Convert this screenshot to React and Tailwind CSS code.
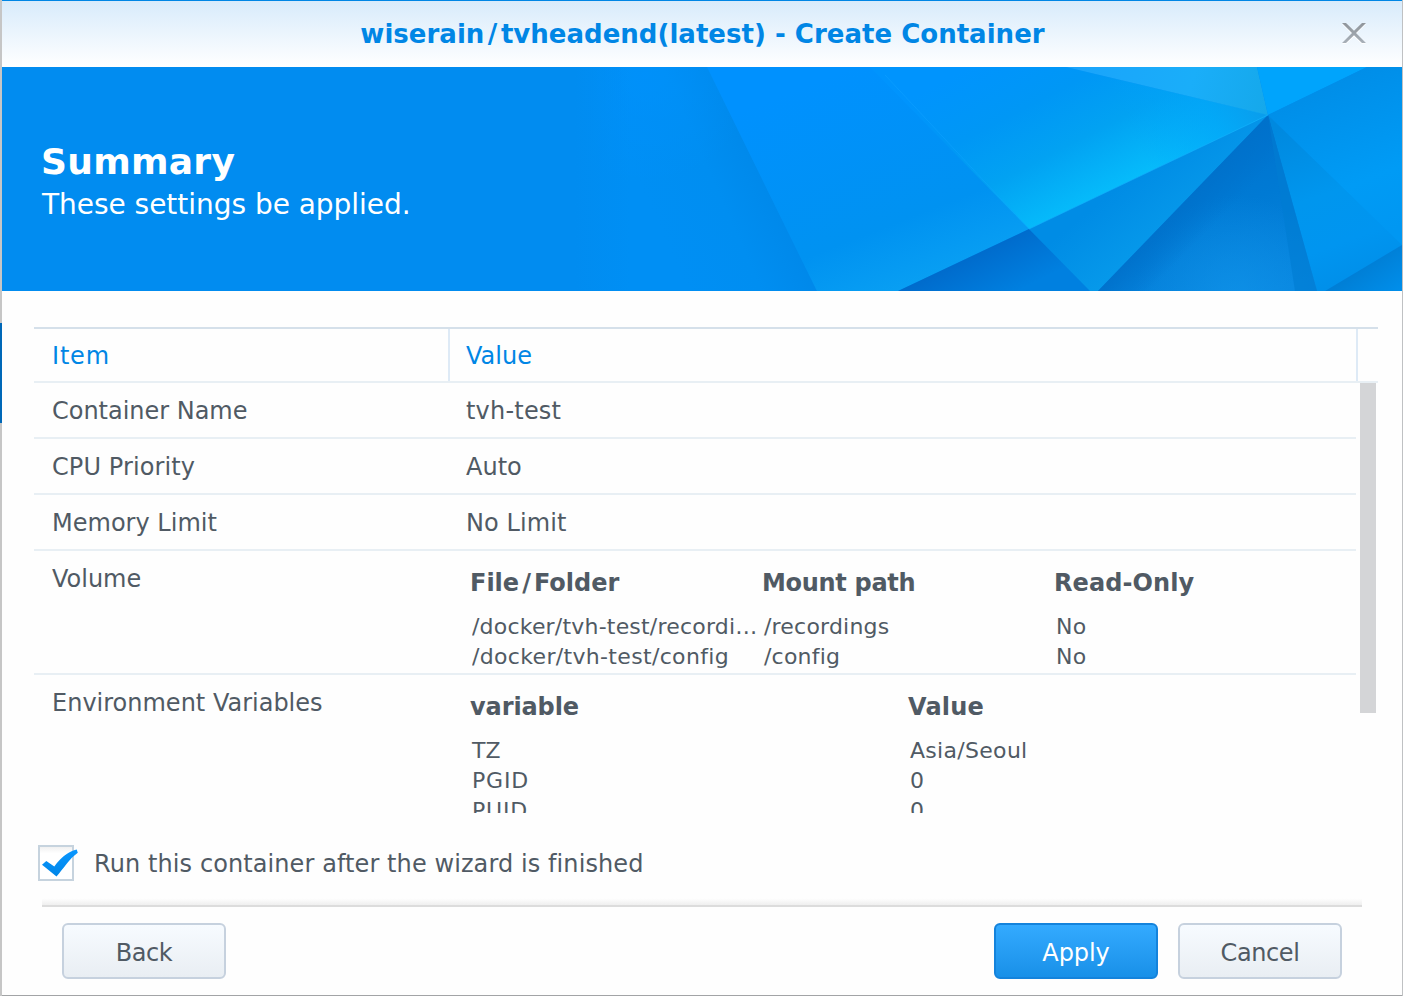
const settings = [
  { item: 'Container Name', value: 'tvh-test', itemCls: 'tracking-[-0.02px]', valueCls: 'tracking-[0.2px]' },
  { item: 'CPU Priority', value: 'Auto', itemCls: 'tracking-[0.1px]', valueCls: 'tracking-[0px]' },
  { item: 'Memory Limit', value: 'No Limit', itemCls: 'tracking-[0.02px]', valueCls: 'tracking-[0.1px]' },
];

const volumes = [
  { path: '/docker/tvh-test/recordings', mount: '/recordings', readOnly: 'No', pathCls: 'tracking-[0.2px]' },
  { path: '/docker/tvh-test/config', mount: '/config', readOnly: 'No', pathCls: 'tracking-[0.33px]' },
];

const variables = [
  { name: 'TZ', value: 'Asia/Seoul', nameCls: 'tracking-[0px]' },
  { name: 'PGID', value: '0', nameCls: 'tracking-[0.8px]' },
  { name: 'PUID', value: '0', nameCls: 'tracking-[0.8px]' },
];

function BannerArt() {
  return (
    <svg className="absolute inset-0 h-full w-full" viewBox="2 67 1400 224" preserveAspectRatio="none" aria-hidden="true">
      <defs>
        <linearGradient id="fold" gradientUnits="userSpaceOnUse" x1="640" y1="185" x2="765" y2="130">
          <stop offset="0" stopColor="#008ff4" />
          <stop offset="0.5" stopColor="#008ef1" />
          <stop offset="1" stopColor="#0087e8" />
        </linearGradient>
        <linearGradient id="base" gradientUnits="userSpaceOnUse" x1="575" y1="0" x2="630" y2="0">
          <stop offset="0" stopColor="#018cf0" />
          <stop offset="1" stopColor="#018cf0" stopOpacity="0" />
        </linearGradient>
        <radialGradient id="glow" gradientUnits="userSpaceOnUse" cx="645" cy="75" r="110">
          <stop offset="0" stopColor="#0092ff" stopOpacity="0.6" />
          <stop offset="1" stopColor="#0092ff" stopOpacity="0" />
        </radialGradient>
        <linearGradient id="panel" gradientUnits="userSpaceOnUse" x1="820" y1="80" x2="910" y2="310">
          <stop offset="0" stopColor="#0091fe" />
          <stop offset="0.65" stopColor="#0092f1" />
          <stop offset="1" stopColor="#0ba3f3" />
        </linearGradient>
        <linearGradient id="bright" gradientUnits="userSpaceOnUse" x1="1040" y1="30" x2="1122" y2="187">
          <stop offset="0" stopColor="#0094fd" />
          <stop offset="0.35" stopColor="#0097f5" />
          <stop offset="0.65" stopColor="#02a2f2" />
          <stop offset="1" stopColor="#06bcfb" />
        </linearGradient>
        <linearGradient id="brightEnd" gradientUnits="userSpaceOnUse" x1="1150" y1="171" x2="1268" y2="115">
          <stop offset="0" stopColor="#009ffa" stopOpacity="0" />
          <stop offset="0.6" stopColor="#02a2f7" stopOpacity="0.65" />
          <stop offset="1" stopColor="#0a9ceb" />
        </linearGradient>
        <linearGradient id="topLight" gradientUnits="userSpaceOnUse" x1="1070" y1="60" x2="1268" y2="115">
          <stop offset="0" stopColor="#1aa3fb" />
          <stop offset="0.6" stopColor="#1aaef9" />
          <stop offset="1" stopColor="#15a8ea" />
        </linearGradient>
        <linearGradient id="right" gradientUnits="userSpaceOnUse" x1="1320" y1="85" x2="1380" y2="235">
          <stop offset="0" stopColor="#008ee8" />
          <stop offset="0.65" stopColor="#009bf5" />
          <stop offset="1" stopColor="#0097f2" />
        </linearGradient>
        <linearGradient id="lowRight" gradientUnits="userSpaceOnUse" x1="1275" y1="130" x2="1335" y2="291">
          <stop offset="0" stopColor="#0089df" />
          <stop offset="0.45" stopColor="#0096ee" />
          <stop offset="0.75" stopColor="#0095f0" />
          <stop offset="1" stopColor="#008fe9" />
        </linearGradient>
        <linearGradient id="wedge" gradientUnits="userSpaceOnUse" x1="1120" y1="185" x2="1170" y2="245">
          <stop offset="0" stopColor="#008ce5" />
          <stop offset="1" stopColor="#079beb" />
        </linearGradient>
        <linearGradient id="dark" gradientUnits="userSpaceOnUse" x1="1215" y1="110" x2="1265" y2="291">
          <stop offset="0" stopColor="#0070cb" />
          <stop offset="0.5" stopColor="#007ad4" />
          <stop offset="1" stopColor="#0886df" />
        </linearGradient>
        <linearGradient id="darkEdge" gradientUnits="userSpaceOnUse" x1="1180" y1="200" x2="1210" y2="229">
          <stop offset="0" stopColor="#0071cb" />
          <stop offset="1" stopColor="#0071cb" stopOpacity="0" />
        </linearGradient>
        <radialGradient id="darkGlow" gradientUnits="userSpaceOnUse" cx="1235" cy="295" r="100">
          <stop offset="0" stopColor="#1094ea" stopOpacity="0.65" />
          <stop offset="1" stopColor="#1094ea" stopOpacity="0" />
        </radialGradient>
        <linearGradient id="navy" gradientUnits="userSpaceOnUse" x1="975" y1="250" x2="1000" y2="300">
          <stop offset="0" stopColor="#006acb" />
          <stop offset="1" stopColor="#0080e0" />
        </linearGradient>
        <linearGradient id="corner" gradientUnits="userSpaceOnUse" x1="1362" y1="268" x2="1385" y2="300">
          <stop offset="0" stopColor="#007fd6" />
          <stop offset="1" stopColor="#008eea" />
        </linearGradient>
      </defs>
      <rect x="2" y="67" width="1400" height="224" fill="#018cf0" />
      <path d="M575 67H707L817 291H575Z" fill="url(#fold)" />
      <path d="M575 67H707L817 291H575Z" fill="url(#glow)" />
      <rect x="574" y="67" width="56" height="224" fill="url(#base)" />
      <path d="M707 67H878L1029 229L898 291H817Z" fill="url(#panel)" />
      <path d="M870 67H1066L1268 115L1029 229Z" fill="url(#bright)" />
      <path d="M870 67H1066L1268 115L1029 229Z" fill="url(#brightEnd)" />
      <path d="M1066 67H1257L1268 115Z" fill="url(#topLight)" />
      <path d="M1257 67H1367L1268 115Z" fill="#00a4fc" />
      <path d="M1367 67H1402V246L1268 115Z" fill="url(#right)" />
      <path d="M1268 115L1402 245L1325 291H1315Z" fill="url(#lowRight)" />
      <path d="M1268 115L1029 229L1089 291H1098Z" fill="url(#wedge)" />
      <path d="M1268 115L1098 291H1317Z" fill="url(#dark)" />
      <path d="M1268 115L1098 291H1317Z" fill="url(#darkGlow)" />
      <path d="M1268 115L1098 291H1317Z" fill="url(#darkEdge)" />
      <path d="M1268 115L1295 291H1317Z" fill="#007cd2" opacity="0.65" />
      <path d="M1029 229L898 291H1090Z" fill="url(#navy)" />
      <path d="M1402 245L1325 291H1402Z" fill="url(#corner)" />
      <path d="M885 75L1029 229" stroke="#10a4ff" strokeOpacity="0.5" fill="none" />
      <path d="M1029 229L1268 115" stroke="#12b4fc" strokeOpacity="0.7" fill="none" />
    </svg>
  );
}

function TextButton({ children, primary = false, labelCls = '' }) {
  const skin = primary
    ? 'border-[#1483dc] bg-linear-to-b from-[#33aaff] to-[#1890e8] text-white'
    : 'border-[#c6d1de] bg-linear-to-b from-[#f7fbff] to-[#e9eef3] text-[#505a64]';
  return (
    <button className={`h-14 w-41 rounded-md border-2 pt-[3px] text-[24px] leading-[51px] ${skin}`}>
      <span className={labelCls}>{children}</span>
    </button>
  );
}

export default function App() {
  return (
    <div className="flex h-[996px] w-[1403px] overflow-hidden bg-[#fefefe] font-['DejaVu_Sans',Verdana,sans-serif] text-[24px] leading-8 text-[#505a64]">
      <div className="flex w-0.5 shrink-0 flex-col bg-[#c6c6c6] pt-[323px]">
        <div className="h-[100px] bg-[#0068b8]" />
      </div>

      <div className="flex w-[1400px] shrink-0 flex-col border-b border-[#a2a4a6]">
        <header className="flex h-[67px] shrink-0 items-center border-t border-[#0086e5] bg-linear-to-b from-[#d8ebfb] to-white pr-9 pl-[61px]">
          <h1 className="flex-1 text-center text-[26px] font-bold tracking-[0.02px] text-[#0086e5]">
            wiserain<span className="px-[3.500px]">/</span>tvheadend(latest) - Create Container
          </h1>
          <button aria-label="Close" className="h-6 w-6">
            <svg viewBox="0 0 24 24" className="h-6 w-6" fill="none">
              <defs>
                <linearGradient id="cross" gradientUnits="userSpaceOnUse" x1="0" y1="1" x2="0" y2="21">
                  <stop offset="0" stopColor="#8f959b" />
                  <stop offset="1" stopColor="#a8b0b8" />
                </linearGradient>
              </defs>
              <path d="M0 2H4L12 9.300L20 2H24L14 12L24 22H20L12 14.700L4 22H0L10 12Z" fill="#fff" />
              <path d="M0 1H4L12 8.800L20 1H24L14 11L24 21H20L12 13.200L4 21H0L10 11Z" fill="url(#cross)" />
            </svg>
          </button>
        </header>

        <section className="relative h-56 shrink-0 overflow-hidden">
          <BannerArt />
          <div className="relative pt-[72px] pl-[39px] text-white">
            <h2 className="text-[36px] leading-[46px] font-bold tracking-[0.3px]">Summary</h2>
            <p className="mt-0.5 pl-px text-[28px] leading-9 tracking-[-0.03px]">These settings be applied.</p>
          </div>
        </section>

        <main className="mt-9 ml-8 w-[1344px] shrink-0">
          <div className="flex h-14 border-t-2 border-b-2 border-t-[#d5e0ea] border-b-[#e8eff4] leading-[54px] text-[#0086e5]">
            <div className="w-[416px] border-r-2 border-[#deeaf6] pl-[18px] tracking-[0.8px]">Item</div>
            <div className="w-[908px] border-r-2 border-[#deeaf6] pl-4">Value</div>
          </div>

          <div className="flex h-[430px] overflow-hidden">
            <div className="w-[1322px]">
              {settings.map((s) => (
                <div key={s.item} className="flex h-14 border-b-2 border-[#e8eff4] pt-3">
                  <div className="w-[432px] pl-[18px]"><span className={s.itemCls}>{s.item}</span></div>
                  <div><span className={s.valueCls}>{s.value}</span></div>
                </div>
              ))}

              <div className="flex h-31 border-b-2 border-[#e8eff4]">
                <div className="w-[436px] pt-3 pl-[18px]">Volume</div>
                <div className="pt-4">
                  <div className="flex font-bold">
                    <div className="w-[292px]">File<span className="px-[3px]">/</span>Folder</div>
                    <div className="w-[292px] tracking-[-0.3px]">Mount path</div>
                    <div className="tracking-[0.1px]">Read-Only</div>
                  </div>
                  <div className="mt-[13px] ml-0.5 text-[22px] leading-[30px] tracking-[0.2px]">
                    {volumes.map((v) => (
                      <div key={v.path} className="flex">
                        <div className="w-[292px] pr-1"><div className={`truncate ${v.pathCls}`}>{v.path}</div></div>
                        <div className="w-[292px]">{v.mount}</div>
                        <div>{v.readOnly}</div>
                      </div>
                    ))}
                  </div>
                </div>
              </div>

              <div className="flex">
                <div className="w-[436px] pt-3 pl-[18px]">Environment Variables</div>
                <div className="pt-4">
                  <div className="flex font-bold">
                    <div className="w-[438px] tracking-[-0.1px]">variable</div>
                    <div className="tracking-[0.2px]">Value</div>
                  </div>
                  <div className="mt-[13px] ml-0.5 text-[22px] leading-[30px]">
                    {variables.map((v) => (
                      <div key={v.name} className="flex">
                        <div className="w-[438px]"><span className={v.nameCls}>{v.name}</span></div>
                        <div className="tracking-[0.3px]">{v.value}</div>
                      </div>
                    ))}
                  </div>
                </div>
              </div>
            </div>
            <div className="ml-1 h-[330px] w-4 bg-[#d4d5d7]" />
          </div>
        </main>

        <label className="mt-8 ml-9 flex h-9 shrink-0 items-center">
          <span className="relative h-9 w-9 border-2 border-[#c6d3de] bg-linear-to-b from-[#f1f1f1] to-white to-20%">
            <svg viewBox="0 0 40 36" className="absolute -top-0.5 -left-0.5 h-9 w-10 max-w-none">
              <defs>
                <linearGradient id="tick" x1="0" y1="0" x2="0" y2="1">
                  <stop offset="0" stopColor="#0a97ff" />
                  <stop offset="1" stopColor="#0086e8" />
                </linearGradient>
              </defs>
              <path d="M4 19.700L8.300 16L16.300 21.500C20 16.500 24 12 28.700 9C32 6.800 35 5.500 38.700 4.500L39.800 7.800C35.500 11 32 14.500 28.700 18.800C25 23.500 22 27.500 18.500 31.500Z" fill="url(#tick)" />
            </svg>
          </span>
          <span className="pt-0.5 pl-5 tracking-[0.09px]">Run this container after the wizard is finished</span>
        </label>

        <div className="mt-[17px] ml-10 h-[9px] w-[1320px] shrink-0 border-b-2 border-[#dcdcdc] bg-linear-to-b from-white to-[#efefef]" />

        <footer className="mt-4 flex gap-5 pr-[60px] pl-[60px]">
          <TextButton labelCls="tracking-[-0.4px]">Back</TextButton>
          <div className="flex-1" />
          <TextButton primary labelCls="tracking-[-0.1px]">Apply</TextButton>
          <TextButton labelCls="tracking-[-0.4px]">Cancel</TextButton>
        </footer>
      </div>

      <div className="w-px shrink-0 bg-[#bfc1c3]" />
    </div>
  );
}
